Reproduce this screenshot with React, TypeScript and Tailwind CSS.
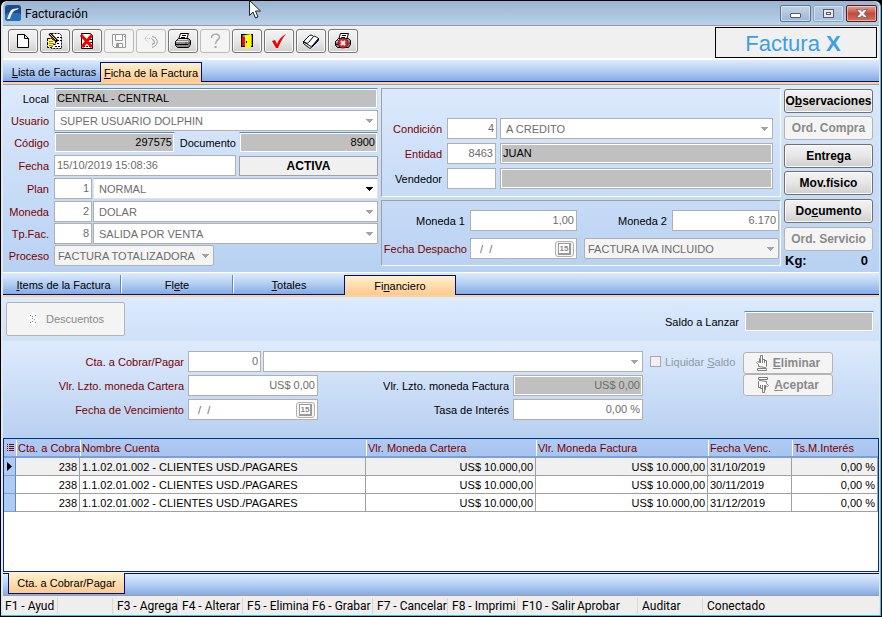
import type { ReactNode } from "react";

const gray = "border-[#b0b0b0]";
const tabStrip = "bg-linear-to-b from-[#deebfc] via-[#b5cff3] to-[#84abe3]";
const activeTab = "bg-linear-to-b from-[#fef1cd] to-[#fec98f] border-[#00107b]";

interface FieldProps {
  id: string;
  label?: string;
  value?: string;
  className?: string;
  right?: boolean;
  filled?: boolean;
  dark?: boolean;
  blueTop?: boolean;
}

function Field({ id, label, value = "", className = "", right, filled, dark, blueTop }: FieldProps) {
  return (
    <input
      id={id}
      aria-label={label}
      defaultValue={value}
      readOnly
      className={`h-[21px] min-w-0 border px-[2px] pb-px outline-none ${right ? "text-right" : ""} ${
        filled ? "bg-[#c0c0c0] shadow-[inset_-1px_-1px_0_#fff,inset_1px_1px_0_#fff]" : "bg-white"
      } ${dark ? "text-black" : "text-[#6d6d6d]"} ${
        blueTop ? "border-[#cfe0f4] border-t-[#4f8fc4]" : gray
      } ${className}`}
    />
  );
}

interface ComboProps {
  id: string;
  label?: string;
  value?: string;
  className?: string;
  flat?: boolean;
  active?: boolean;
}

function Combo({ id, label, value = "", className = "", flat, active }: ComboProps) {
  return (
    <span className={`relative flex h-[21px] min-w-0 ${className}`}>
      <select
        id={id}
        aria-label={label}
        defaultValue={value}
        className={`w-full appearance-none border pr-4 text-[#6d6d6d] outline-none ${
          flat ? "rounded-xs bg-[#f4f4f4] pl-[3px]" : "bg-white pl-[5px]"
        } ${active ? "border-[#e2e3ea] border-t-[#abadb3]" : gray}`}
      >
        <option>{value}</option>
      </select>
      <svg
        className={`pointer-events-none absolute right-[5px] top-[9px] h-1 w-[7px] ${active ? "fill-black" : "fill-[#a3a3a3]"}`}
        viewBox="0 0 7 4"
        shapeRendering="crispEdges"
      >
        <path d="M0 0h7v1H6v1H5v1H4v1H3V3H2V2H1V1H0z" />
      </svg>
    </span>
  );
}

function DateField({ id, label, className = "" }: { id: string; label?: string; className?: string }) {
  return (
    <span className={`flex h-[21px] items-center border bg-white pr-[2px] ${gray} ${className}`}>
      <input
        id={id}
        aria-label={label}
        defaultValue="/  /"
        readOnly
        className="min-w-0 flex-1 whitespace-pre pl-[9px] text-[#6d6d6d] outline-none"
      />
      <button
        type="button"
        aria-label="Calendario"
        className="flex h-4 w-[19px] items-center justify-center rounded-[3px] border border-[#b0b0b0] bg-[#f4f4f4]"
      >
        <span className="border-2 border-l border-t border-[#9a9a9a] bg-white px-px text-[8px] font-bold leading-[9px] text-[#8a8a8a]">
          15
        </span>
      </button>
    </span>
  );
}

function Label({ htmlFor, children, className = "", black }: { htmlFor: string; children: ReactNode; className?: string; black?: boolean }) {
  return (
    <label
      htmlFor={htmlFor}
      className={`shrink-0 whitespace-nowrap text-right ${black ? "text-black" : "text-[#7b0000]"} ${className}`}
    >
      {children}
    </label>
  );
}

function SideButton({ children, disabled, className = "" }: { children: ReactNode; disabled?: boolean; className?: string }) {
  return (
    <button
      type="button"
      disabled={disabled}
      className={`flex h-6 w-full items-center justify-center whitespace-nowrap rounded-[3px] border text-xs font-bold ${
        disabled
          ? "border-[#b4b4b4] bg-[#f4f4f4] text-[#8a8a8a]"
          : "border-[#707070] bg-linear-to-b from-[#f3f3f3] via-[#e6e6e6] to-[#cfcfcf] text-black shadow-[inset_0_0_0_1px_#fbfbfb]"
      } ${className}`}
    >
      {children}
    </button>
  );
}

const printerShape = (
  <>
    <path d="M5.500.5h8l-2 6h-8z" fill="#fff" stroke="#000" />
    <path d="M7 2.500h4M6 4.500h4" stroke="#000" />
    <path d="M.5 8.500l3-3h10l2 2v4l-2 3h-11l-2-2z" fill="#8a8a8a" stroke="#000" />
    <path d="M3 6.500h9M1 8.500h12" stroke="#e4e4e4" />
    <path d="M1 11.500h12l2-2" stroke="#000" fill="none" />
    <path d="M10 10h2" stroke="#e00000" />
  </>
);

const tools: { name: string; disabled?: boolean; icon: ReactNode }[] = [
  {
    name: "Nuevo",
    icon: <path d="M2.500 1.500h7l4 4v9h-11z M9.500 1.500v4h4" fill="#fff" stroke="#000" />,
  },
  {
    name: "Modificar",
    icon: (
      <>
        <path d="M4.500.5h8l2 2v13h-10z" fill="#fff" stroke="#000" strokeDasharray="2 1" />
        <path d="M10 4.500h4M10 7.500h4M10 10.500h3M8 13.500h5" stroke="#000" strokeDasharray="2 1" />
        <path d="M.5 5.500h4l4 3v3h-2l-2 3h-4z" fill="#ffee80" stroke="#000" strokeDasharray="3 1" />
        <path d="M2 8.500h4M2 10.500h5M2 12.500h3" stroke="#b08a00" />
        <path d="M2.500.5l8 8" stroke="#000" strokeWidth="3" />
        <path d="M3 1l6 6" stroke="#ffe000" />
      </>
    ),
  },
  {
    name: "Eliminar registro",
    icon: (
      <>
        <path d="M2.500.5h9l2 2v13h-11z" fill="#fff" stroke="#000" />
        <path d="M11 6.500h2M11 9.500h2M4 13.500h8" stroke="#000" strokeDasharray="2 1" />
        <path d="M2 2l11 12M13 2L3 14" stroke="#f00000" strokeWidth="3" />
      </>
    ),
  },
  {
    name: "Guardar",
    disabled: true,
    icon: (
      <>
        <path d="M1.500 1.500h13v13h-11l-2-2z" fill="#f8f8f8" stroke="#999" />
        <path d="M4.500 1.500h7v6h-7zM5.500 10.500h6v4h-6z" fill="#fff" stroke="#999" />
        <path d="M7 11v3" stroke="#999" strokeWidth="2" />
        <path d="M13 3.500h1" stroke="#999" />
      </>
    ),
  },
  {
    name: "Deshacer",
    disabled: true,
    icon: (
      <>
        <path d="M5.500 1.500l-4 4 4 4M2 5.500h6c3 0 4 3 3 5" fill="none" stroke="#bcbcbc" strokeDasharray="1 1" />
        <path d="M9 3.500c7 1 7 9 0 11M9 6.500c3 1 3 4 0 5l3-2" fill="none" stroke="#9a9a9a" />
      </>
    ),
  },
  { name: "Imprimir", icon: printerShape },
  {
    name: "Ayuda",
    disabled: true,
    icon: (
      <>
        <path d="M4.500 5c0-5 8-5 8-1 0 3-4 3-4 7" fill="none" stroke="#a8a8a8" strokeWidth="1.500" />
        <path d="M7.500 13h2v2h-2z" fill="#a8a8a8" />
      </>
    ),
  },
  {
    name: "Salir",
    icon: (
      <>
        <path d="M2 1h12v13H2z" fill="#000" />
        <path d="M3 2h4v11H3z" fill="#f00" />
        <path d="M4 2h2v2H4z" fill="#0cf" />
        <path d="M6 2l6-1v13l-6 2z" fill="#ff0" />
        <path d="M7 8h1v2H7z" fill="#000" />
        <path d="M12 2h1v11h-1z" fill="#b0b000" />
      </>
    ),
  },
  {
    name: "Confirmar",
    icon: <path d="M1 8l3-1 2 4c2-5 5-8 9-10-4 5-6 9-8 14H5z" fill="#f00000" />,
  },
  {
    name: "Libro",
    icon: (
      <>
        <path d="M.5 8.500l6-6c2-1 3 0 4 1 1-1 2 0 5 2l-6 7c-1 1-2 1-3 0z" fill="#fff" stroke="#000" />
        <path d="M10.500 3.500l-5 6c-1 1-3 1-5-1v2l5 4c1 1 2 1 3 0l7-7V5.500" fill="none" stroke="#000" />
        <path d="M9 13l6-6" stroke="#0000a8" />
      </>
    ),
  },
  {
    name: "Cancelar impresión",
    icon: (
      <>
        {printerShape}
        <circle cx="8" cy="10" r="5" fill="#d22a2a" stroke="#8c1010" />
        <path d="M6 8l4 4M10 8l-4 4" stroke="#fff" strokeWidth="2" />
      </>
    ),
  },
];

function TitleBar() {
  const box = "flex h-[17px] w-[31px] items-center justify-center rounded-[2px] border shadow-[inset_0_0_0_1px_rgba(255,255,255,.45)]";
  return (
    <header className="flex h-[25px] shrink-0 items-center rounded-t-md border-b border-[#9a9a9a] bg-linear-to-b from-[#9bb4d1] to-[#b9d1ea] pl-[2px] pr-[2px]">
      <svg className="mr-1 h-4 w-4" viewBox="0 0 16 16">
        <rect width="16" height="16" rx="3" fill="#1f4a86" />
        <rect y="8" width="16" height="8" rx="3" fill="#2b6cb8" />
        <path d="M2 14c2-5 3-9 6-10l6-1-2 2c-4 0-6 5-7 9z" fill="#e8f2fc" />
      </svg>
      <h1 className="flex-1 pt-[2px] font-[Roboto] text-xs">Facturación</h1>
      <div className="flex gap-[2px]">
        <button type="button" aria-label="Minimizar" className={`${box} border-[#5d7594] bg-linear-to-b from-[#c5d5e8] to-[#9db7d5]`}>
          <span className="mt-1 h-[5px] w-[11px] rounded-[1px] border border-[#525c6b] bg-white" />
        </button>
        <button type="button" aria-label="Maximizar" className={`${box} border-[#8ba3c0] bg-linear-to-b from-[#b7cbe2] to-[#a7c0dc]`}>
          <span className="flex h-[9px] w-[11px] items-center justify-center border border-[#525c6b] bg-[#e8e8ee]">
            <span className="h-[3px] w-[5px] border border-[#525c6b]" />
          </span>
        </button>
        <button type="button" aria-label="Cerrar" className={`${box} border-[#5a1820] bg-linear-to-b from-[#e0a498] via-[#c5493a] to-[#d0705a]`}>
          <svg className="h-[9px] w-3" viewBox="0 0 12 9">
            <path d="M.5.5h3.500l2 2 2-2h3.500L8 4.500l3.500 4H8l-2-2-2 2H.5L4 4.500z" fill="#fff" stroke="#53545c" strokeWidth=".7" />
          </svg>
        </button>
      </div>
    </header>
  );
}

function Toolbar() {
  return (
    <div className="flex h-[34px] shrink-0 justify-between border-b-2 border-white bg-[#f0f0f0] pl-[5px] pr-[2px]">
      <div className="flex gap-[2px] pt-[3px]">
        {tools.map((t) => (
          <button
            key={t.name}
            type="button"
            aria-label={t.name}
            disabled={t.disabled}
            className={`flex h-6 w-[30px] items-center justify-center rounded-[3px] border ${
              t.disabled
                ? "border-[#bcbcbc] bg-[#f4f4f4]"
                : "border-[#757575] bg-linear-to-b from-[#f3f3f3] via-[#e8e8e8] to-[#d0d0d0] shadow-[inset_0_0_0_1px_#fbfbfb]"
            }`}
          >
            <svg className="h-4 w-4" viewBox="0 0 16 16">
              {t.icon}
            </svg>
          </button>
        ))}
      </div>
      <div className="mt-px flex h-[31px] w-[162px] items-center justify-center border border-black pr-[6px] pt-[2px] text-[22px] text-[#3c9fe6]">
        <span>
          Factura <b>X</b>
        </span>
      </div>
    </div>
  );
}

function GeneralForm() {
  const row = "flex items-center";
  const lbl = "mr-[5px] w-[46px]";
  return (
    <div className="w-[375px] shrink-0 pt-[3px]">
      <div className="flex flex-col gap-px">
        <div className={row}>
          <Label htmlFor="local" black className={lbl}>Local</Label>
          <Field id="local" value="CENTRAL - CENTRAL" filled dark blueTop className="flex-1" />
        </div>
        <div className={row}>
          <Label htmlFor="usuario" className={lbl}>Usuario</Label>
          <Combo id="usuario" value="SUPER USUARIO DOLPHIN" className="flex-1" />
        </div>
        <div className={row}>
          <Label htmlFor="codigo" className={lbl}>Código</Label>
          <Field id="codigo" value="297575" filled dark right blueTop className="w-[121px]" />
          <Label htmlFor="documento" black className="w-[61px]">Documento</Label>
          <Field id="documento" value="8900" filled dark right blueTop className="ml-[3px] flex-1" />
        </div>
        <div className={`${row} mt-px`}>
          <Label htmlFor="fecha" className={lbl}>Fecha</Label>
          <Field id="fecha" value="15/10/2019 15:08:36" className="w-[182px]" />
          <output className="ml-[3px] flex h-5 flex-1 items-center justify-center border border-[#a0a0a0] bg-[#f0f0f0] text-xs font-bold">
            ACTIVA
          </output>
        </div>
        <div className={`${row} mt-px`}>
          <Label htmlFor="plan" className={lbl}>Plan</Label>
          <Field id="plan" value="1" right className="w-[38px]" />
          <Combo id="plan-nombre" label="Nombre del plan" value="NORMAL" active className="ml-px flex-1" />
        </div>
        <div className={`${row} mt-px`}>
          <Label htmlFor="moneda" className={lbl}>Moneda</Label>
          <Field id="moneda" value="2" right className="w-[38px]" />
          <Combo id="moneda-nombre" label="Nombre de la moneda" value="DOLAR" className="ml-px flex-1" />
        </div>
        <div className={row}>
          <Label htmlFor="tpfac" className={lbl}>Tp.Fac.</Label>
          <Field id="tpfac" value="8" right className="w-[38px]" />
          <Combo id="tpfac-nombre" label="Tipo de factura" value="SALIDA POR VENTA" className="ml-px flex-1" />
        </div>
        <div className={row}>
          <Label htmlFor="proceso" className={lbl}>Proceso</Label>
          <Combo id="proceso" value="FACTURA TOTALIZADORA" flat className="w-[160px]" />
        </div>
      </div>
    </div>
  );
}

function ConditionForm() {
  const group = "border border-b-white border-l-[#a0a0a0] border-r-white border-t-[#a0a0a0]";
  const lbl = "mr-[5px] w-[60px]";
  return (
    <div className="ml-[3px] mr-[3px] flex min-w-0 flex-1 flex-col gap-[3px] pt-[3px]">
      <div className={`${group} flex h-[109px] flex-col gap-1 pr-[7px] pt-[29px]`}>
        <div className="flex items-center">
          <Label htmlFor="condicion" className={lbl}>Condición</Label>
          <Field id="condicion" value="4" right className="w-[50px]" />
          <Combo id="condicion-nombre" label="Nombre de la condición" value="A CREDITO" className="ml-[3px] flex-1" />
        </div>
        <div className="flex items-center">
          <Label htmlFor="entidad" className={lbl}>Entidad</Label>
          <Field id="entidad" value="8463" right className="w-[49px]" />
          <Field id="entidad-nombre" label="Nombre de la entidad" value="JUAN" filled dark className="ml-1 flex-1" />
        </div>
        <div className="flex items-center">
          <Label htmlFor="vendedor" black className={lbl}>Vendedor</Label>
          <Field id="vendedor" className="w-[49px]" />
          <Field id="vendedor-nombre" label="Nombre del vendedor" filled className="ml-1 flex-1" />
        </div>
      </div>
      <div className={`${group} flex h-[66px] flex-col gap-[7px] pr-px pt-[9px]`}>
        <div className="flex items-center justify-between">
          <div className="flex items-center">
            <Label htmlFor="moneda1" black className="mr-[5px] w-[83px]">Moneda 1</Label>
            <Field id="moneda1" value="1,00" right className="w-[107px]" />
          </div>
          <div className="flex items-center">
            <Label htmlFor="moneda2" black className="mr-[5px]">Moneda 2</Label>
            <Field id="moneda2" value="6.170" right className="w-[107px]" />
          </div>
        </div>
        <div className="flex items-center">
          <Label htmlFor="despacho" className="mr-[3px] w-[85px]">Fecha Despacho</Label>
          <DateField id="despacho" className="w-[107px]" />
          <Combo id="iva" label="Tipo de IVA" value="FACTURA IVA INCLUIDO" flat className="ml-[7px] flex-1" />
        </div>
      </div>
    </div>
  );
}

function SideButtons() {
  return (
    <div className="mr-[6px] w-[89px] shrink-0 pt-1">
      <div className="flex flex-col gap-[3px]">
        <SideButton><span>O<u>b</u>servaciones</span></SideButton>
        <SideButton disabled>Ord. Compra</SideButton>
        <SideButton className="mt-px">Entrega</SideButton>
        <SideButton>Mov.físico</SideButton>
        <SideButton className="mt-px"><span>Do<u>c</u>umento</span></SideButton>
        <SideButton disabled className="mt-px">Ord. Servicio</SideButton>
      </div>
      <div className="mt-[2px] flex justify-between pl-px pr-[5px] text-[13px] font-bold leading-4">
        <span>Kg:</span>
        <span>0</span>
      </div>
    </div>
  );
}

function HandIcon({ down }: { down?: boolean }) {
  return (
    <svg className={`mr-[5px] h-4 w-3 ${down ? "rotate-180" : ""}`} viewBox="0 0 12 16">
      <path d="M2.500 11.500v-2l-2-2 1-1 2 1v-4h1v-3h2v4h2v1h2v6l-1 1z" fill="#fff" stroke="#7d7d7d" />
      <path d="M4.500 4v4M6.500 4v4M8.500 5v3" stroke="#7d7d7d" />
      <path d="M1.500 13.500h9v2h-9z" fill="#fff" stroke="#7d7d7d" />
    </svg>
  );
}

function FinancialForm() {
  return (
    <>
      <div className="flex h-11 shrink-0 items-start justify-between bg-linear-to-b from-[#dcebfd] to-[#cfe0f8] pl-[3px] pr-[5px] pt-[5px]">
        <button
          type="button"
          disabled
          className="flex h-[34px] w-[119px] items-center justify-center rounded-[2px] border border-[#b4b4b4] bg-[#f4f4f4] text-[#8a8a8a]"
        >
          <svg className="mr-[7px] h-4 w-3" viewBox="0 0 12 16">
            <path d="M10 3.500H4C1 3.500 1 7.500 4 7.500h4c3 0 3 4.500 0 4.500H2M6 1v14" fill="none" stroke="#fff" strokeWidth="2" />
            <path d="M3 4.500h1M5 5.500h1M8 4.500h1M5 7.500h1M7 8.500h1M3 11.500h1M5 10.500h1M8 11.500h1" stroke="#8a8a8a" />
          </svg>
          <span>Descuentos</span>
        </button>
        <div className="mt-[9px] flex items-center">
          <Label htmlFor="saldo" black className="mr-[5px]">Saldo a Lanzar</Label>
          <Field id="saldo" filled blueTop className="w-[130px]" />
        </div>
      </div>

      <div className="flex h-[97px] shrink-0 bg-linear-to-b from-[#deebfd] to-[#b8d0f0] pt-[10px]">
        <div className="flex min-w-0 flex-1 flex-col gap-[3px]">
          <div className="flex items-center">
            <Label htmlFor="cuenta" className="mr-1 w-[181px]">Cta. a Cobrar/Pagar</Label>
            <Field id="cuenta" value="0" right className="w-[73px]" />
            <Combo id="cuenta-nombre" label="Nombre de la cuenta" className="ml-[2px] flex-1" />
          </div>
          <div className="flex items-center justify-between">
            <div className="flex items-center">
              <Label htmlFor="cartera" className="mr-1 w-[181px]">Vlr. Lzto. moneda Cartera</Label>
              <Field id="cartera" value="US$ 0,00" right className="w-[130px]" />
            </div>
            <div className="flex items-center">
              <Label htmlFor="factura" black className="mr-1">Vlr. Lzto. moneda Factura</Label>
              <Field id="factura" value="US$ 0,00" right filled className="w-[130px]" />
            </div>
          </div>
          <div className="flex items-center justify-between">
            <div className="flex items-center">
              <Label htmlFor="vencimiento" className="mr-1 w-[181px]">Fecha de Vencimiento</Label>
              <DateField id="vencimiento" className="w-[130px]" />
            </div>
            <div className="flex items-center">
              <Label htmlFor="tasa" black className="mr-1">Tasa de Interés</Label>
              <Field id="tasa" value="0,00 %" right className="w-[130px]" />
            </div>
          </div>
        </div>
        <div className="flex w-[236px] shrink-0 items-start pl-[7px]">
          <label className="flex h-[21px] w-[93px] items-center gap-1 whitespace-nowrap text-[#8f99a8]">
            <input type="checkbox" disabled className="h-[11px] w-[11px] shrink-0 appearance-none border border-[#a8a8a8] bg-[#f0f0f0]" />
            <span>Liquidar <u>S</u>aldo</span>
          </label>
          <div className="flex w-[90px] flex-col pt-px">
            <SideButton disabled className="h-[22px]!"><HandIcon /><span><u>E</u>liminar</span></SideButton>
            <SideButton disabled className="h-[22px]!"><HandIcon down /><span><u>A</u>ceptar</span></SideButton>
          </div>
        </div>
      </div>
    </>
  );
}

const payments = [
  { account: "238", name: "1.1.02.01.002 - CLIENTES USD./PAGARES", wallet: "US$ 10.000,00", invoice: "US$ 10.000,00", due: "31/10/2019", rate: "0,00 %" },
  { account: "238", name: "1.1.02.01.002 - CLIENTES USD./PAGARES", wallet: "US$ 10.000,00", invoice: "US$ 10.000,00", due: "30/11/2019", rate: "0,00 %" },
  { account: "238", name: "1.1.02.01.002 - CLIENTES USD./PAGARES", wallet: "US$ 10.000,00", invoice: "US$ 10.000,00", due: "31/12/2019", rate: "0,00 %" },
];

const headers = ["Cta. a Cobra", "Nombre Cuenta", "Vlr. Moneda Cartera", "Vlr. Moneda Factura", "Fecha Venc.", "Ts.M.Interés"];

function PaymentsTable() {
  const cell = "h-[18px] overflow-hidden whitespace-nowrap border-b border-r border-[#a0a0a0] p-0 px-[2px] leading-4";
  return (
    <div className="min-h-[134px] flex-1 border border-[#002d96] bg-white">
      <table className="w-full table-fixed border-separate border-spacing-0">
        <colgroup>
          <col className="w-3" />
          <col className="w-16" />
          <col />
          <col className="w-[170px]" />
          <col className="w-[172px]" />
          <col className="w-[84px]" />
          <col className="w-[86px]" />
        </colgroup>
        <thead>
          <tr className="bg-linear-to-b from-[#b0cbf2] to-[#a6c4ef] text-left text-[#7b0000]">
            <th aria-label="Indicador" className="h-[19px] border-b-2 border-[#7b9fdb] p-0">
              <svg className="ml-[3px] h-2 w-2" viewBox="0 0 8 8" shapeRendering="crispEdges">
                <path d="M0 .5h1M2 .5h5M0 2.500h1M2 2.500h5M0 4.500h1M2 4.500h5M0 6.500h1M2 6.500h5" stroke="#7b0000" />
              </svg>
            </th>
            {headers.map((h) => (
              <th key={h} className="h-[19px] whitespace-nowrap border-b-2 border-[#7b9fdb] p-0 font-normal leading-4">
                <div className="border-l border-white pl-px">{h}</div>
              </th>
            ))}
          </tr>
        </thead>
        <tbody>
          {payments.map((p, i) => (
            <tr key={p.due} className={i === 0 ? "bg-[#f0f0f0]" : "bg-white"}>
              <td className="h-[18px] border-b border-r border-b-[#7b9fdb] border-r-[#5c85cc] bg-[#b0cbf2] p-0">
                {i === 0 && (
                  <svg className="ml-[3px] h-[9px] w-[5px]" viewBox="0 0 5 9">
                    <path d="M0 0l5 4.500L0 9z" />
                  </svg>
                )}
              </td>
              <td className={`${cell} text-right`}>{p.account}</td>
              <td className={cell}>{p.name}</td>
              <td className={`${cell} text-right`}>{p.wallet}</td>
              <td className={`${cell} text-right`}>{p.invoice}</td>
              <td className={cell}>{p.due}</td>
              <td className={`${cell} text-right`}>{p.rate}</td>
            </tr>
          ))}
        </tbody>
      </table>
    </div>
  );
}

const statusCells = [
  { text: "F1 - Ayud", width: "w-[55px]" },
  { text: "", width: "w-[55px]" },
  { text: "F3 - Agrega", width: "w-[65px]" },
  { text: "F4 - Alterar", width: "w-[65px]" },
  { text: "F5 - Elimina", width: "w-[65px]" },
  { text: "F6 - Grabar", width: "w-[65px]" },
  { text: "F7 - Cancelar", width: "w-[75px]" },
  { text: "F8 - Imprimi", width: "w-[70px]" },
  { text: "F10 - Salir", width: "w-[55px]" },
  { text: "Aprobar", width: "w-[65px]" },
  { text: "Auditar", width: "w-[65px]" },
  { text: "Conectado", width: "flex-1" },
];

export default function App() {
  return (
    <div className="relative flex min-h-screen bg-black p-px font-[Liberation_Sans,Arial,sans-serif] text-[11px] leading-4 text-black">
      <main className="flex min-w-0 flex-1 flex-col rounded-t-md border-b border-r border-[#35c5e8] bg-[#dfe9f5] pl-[2px] pr-px">
        <TitleBar />
        <Toolbar />

        <nav className={`flex h-[22px] shrink-0 items-end border-b border-[#00107b] ${tabStrip}`}>
          <button type="button" className="h-5 w-[97px] whitespace-nowrap pl-[5px] pt-px"><u>L</u>ista de Facturas</button>
          <button type="button" className={`-mb-px h-5 w-[102px] whitespace-nowrap border border-b-0 ${activeTab}`}>
            <u>F</u>icha de la Factura
          </button>
        </nav>
        <div className="h-[3px] shrink-0 border-b border-[#a0a0a0] bg-[#fed09a]" />

        <section className="flex h-[187px] shrink-0 bg-linear-to-b from-[#dceafc] to-[#b8d1f2]">
          <GeneralForm />
          <ConditionForm />
          <SideButtons />
        </section>

        <nav className={`flex h-[23px] shrink-0 items-end border-b border-t border-b-[#00107b] border-t-white ${tabStrip}`}>
          <button type="button" className="mb-px h-[18px] w-[118px] border-r border-[#5c85cc] pl-1 pt-px"><u>I</u>tems de la Factura</button>
          <button type="button" className="mb-px h-[18px] w-[112px] border-l border-r border-l-white border-r-[#5c85cc] pt-px">Fl<u>e</u>te</button>
          <button type="button" className="mb-px h-[18px] w-[111px] border-l border-white pt-px">
            <u>T</u>otales
          </button>
          <button type="button" className={`-mb-px h-5 w-[112px] border border-b-0 ${activeTab}`}>
            Fi<u>n</u>anciero
          </button>
        </nav>
        <div className="h-[2px] shrink-0 bg-[#fed09a]" />

        <FinancialForm />
        <PaymentsTable />

        <div className="h-px shrink-0 bg-[#fef1cd]" />
        <nav className={`flex h-[23px] shrink-0 items-start border-b border-t border-b-[#a0a0a0] border-t-[#00107b] pl-[5px] ${tabStrip}`}>
          <button type="button" className={`-mt-px h-[21px] w-[117px] whitespace-nowrap border border-t-0 ${activeTab}`}>
            Cta. a Cobrar/Pagar
          </button>
        </nav>

        <footer className="flex h-[19px] shrink-0 items-center bg-[#f0eded] font-[Roboto] text-xs">
          {statusCells.map((c, i) => (
            <div key={i} className={`h-4 shrink-0 whitespace-nowrap border-r border-[#d8d8d8] pl-1 leading-4 last:border-r-0 first:pl-[2px] ${c.width}`}>
              {c.text}
            </div>
          ))}
        </footer>
      </main>

      {/* mouse pointer */}
      <svg className="pointer-events-none absolute left-[249px] top-0 h-[19px] w-3" viewBox="0 0 12 19">
        <path d="M.5.5v15l3.500-3.500 2.500 6 2.500-1-2.500-6h5z" fill="#fff" stroke="#1a2433" />
      </svg>
    </div>
  );
}
